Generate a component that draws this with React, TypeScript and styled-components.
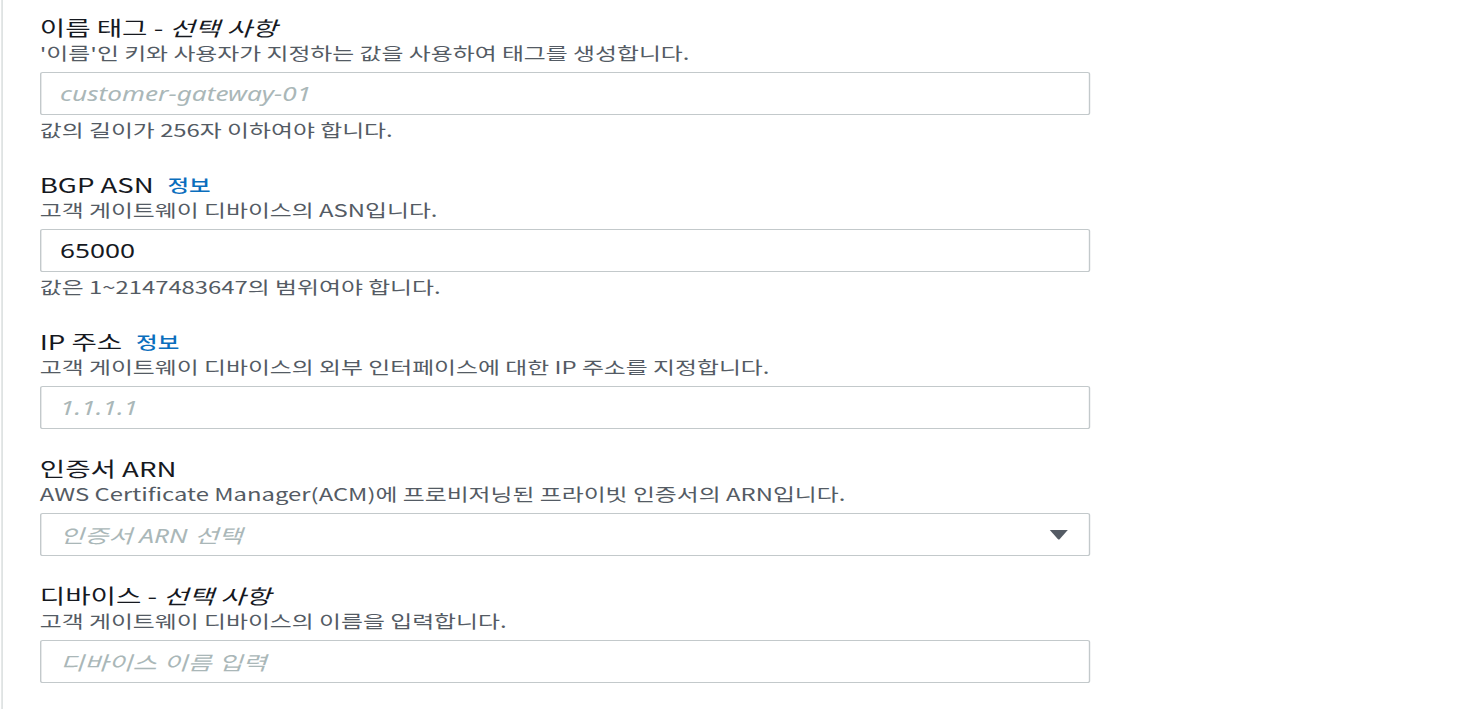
import React from "react";
import styled, { createGlobalStyle } from "styled-components";

// the reference is shot wider than it is tall, so the sheet is stretched sideways
const STRETCH = 1.38;

const GlobalStyle = createGlobalStyle`
  html, body {
    margin: 0;
    padding: 0;
    background: #ffffff;
    overflow: hidden;
  }
  body {
    font-family: "Noto Sans CJK KR", "Noto Sans", sans-serif;
    color: #16191f;
  }
`;

const Sheet = styled.div`
  width: ${1478 / STRETCH}px;
  height: 709px;
  transform: scaleX(${STRETCH});
  transform-origin: left top;
`;

const Panel = styled.div`
  margin-left: 1px;
  height: 100%;
  border-left: 1px solid #d5dbdb;
  padding: 16px 0 0 ${37 / STRETCH}px;
  display: flex;
  flex-direction: column;
  gap: 28px;
  box-sizing: border-box;
`;

const Field = styled.div`
  display: flex;
  flex-direction: column;
  width: ${1050 / STRETCH}px;
`;

const Label = styled.div`
  display: flex;
  align-items: center;
  gap: 10px;
  font-size: 20px;
  line-height: 24px;
  color: #16191f;
`;

const Optional = styled.i`
  font-style: italic;
`;

const InfoLink = styled.a`
  font-size: 17px;
  color: #0a6ebd;
  text-decoration: none;
  font-weight: 500;
`;

const Description = styled.div`
  margin-top: 2px;
  font-size: 17.3px;
  line-height: 22px;
  color: #545b64;
`;

const Constraint = styled.div`
  margin-top: 4px;
  margin-bottom: 4px;
  font-size: 17.3px;
  line-height: 22px;
  color: #545b64;
`;

const Control = styled.div<{ $filled?: boolean }>`
  margin-top: 8px;
  height: 43px;
  box-sizing: border-box;
  border: 1px solid #c3c9cb;
  border-radius: 2px;
  display: flex;
  align-items: center;
  justify-content: space-between;
  padding: 0 ${20 / STRETCH}px 0 ${19 / STRETCH}px;
  font-family: "Noto Sans", "Noto Sans CJK KR", sans-serif;
  font-size: 19px;
  color: ${(p) => (p.$filled ? "#16191f" : "#aab7b8")};
  font-style: ${(p) => (p.$filled ? "normal" : "italic")};
`;

const Caret = styled.svg`
  width: ${20 / STRETCH}px;
  height: 11px;
  flex: none;
`;

export default function App() {
  return (
    <>
      <GlobalStyle />
      <Sheet>
        <Panel>
          <Field>
            <Label>
              <span>
                이름 태그 - <Optional>선택 사항</Optional>
              </span>
            </Label>
            <Description>'이름'인 키와 사용자가 지정하는 값을 사용하여 태그를 생성합니다.</Description>
            <Control>customer-gateway-01</Control>
            <Constraint>값의 길이가 256자 이하여야 합니다.</Constraint>
          </Field>

          <Field>
            <Label>
              <span>BGP ASN</span>
              <InfoLink href="#">정보</InfoLink>
            </Label>
            <Description>고객 게이트웨이 디바이스의 ASN입니다.</Description>
            <Control $filled>65000</Control>
            <Constraint>값은 1~2147483647의 범위여야 합니다.</Constraint>
          </Field>

          <Field>
            <Label>
              <span>IP 주소</span>
              <InfoLink href="#">정보</InfoLink>
            </Label>
            <Description>고객 게이트웨이 디바이스의 외부 인터페이스에 대한 IP 주소를 지정합니다.</Description>
            <Control>1.1.1.1</Control>
          </Field>

          <Field>
            <Label>
              <span>인증서 ARN</span>
            </Label>
            <Description>AWS Certificate Manager(ACM)에 프로비저닝된 프라이빗 인증서의 ARN입니다.</Description>
            <Control>
              <span>인증서 ARN 선택</span>
              <Caret viewBox="0 0 20 11" preserveAspectRatio="none">
                <path d="M1 1 L19 1 L11 10 Q10 11 9 10 Z" fill="#545b64" />
              </Caret>
            </Control>
          </Field>

          <Field>
            <Label>
              <span>
                디바이스 - <Optional>선택 사항</Optional>
              </span>
            </Label>
            <Description>고객 게이트웨이 디바이스의 이름을 입력합니다.</Description>
            <Control>디바이스 이름 입력</Control>
          </Field>
        </Panel>
      </Sheet>
    </>
  );
}
